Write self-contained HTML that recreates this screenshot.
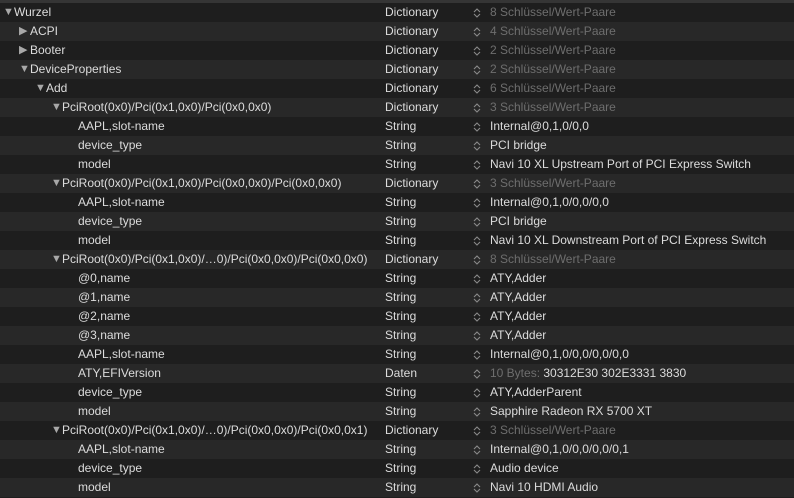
<!DOCTYPE html><html><head><style>
body{margin:0;background:#1e1e1e;width:794px;height:498px;overflow:hidden;font-family:"Liberation Sans",sans-serif;font-size:12px;color:#dcdcdc}
.top{height:3px;background:#353535}
.r{height:19px;position:relative;line-height:19px;white-space:nowrap}
.r:nth-child(even){background:#282828}
.k{position:absolute}
.t{position:absolute;left:385px}
.s{position:absolute;left:473px;top:5px;width:8px;height:10px}
.v{position:absolute;left:490px}
.g{color:#6e6e6e}
.tri{position:absolute;font-size:11px;color:#a8a8a8}
</style></head><body><div class="top"></div><div id="l"></div>
<script>
const rows=[
[0,'d','Wurzel','Dictionary','8 Schlüssel/Wert-Paare',1],
[1,'r','ACPI','Dictionary','4 Schlüssel/Wert-Paare',1],
[1,'r','Booter','Dictionary','2 Schlüssel/Wert-Paare',1],
[1,'d','DeviceProperties','Dictionary','2 Schlüssel/Wert-Paare',1],
[2,'d','Add','Dictionary','6 Schlüssel/Wert-Paare',1],
[3,'d','PciRoot(0x0)/Pci(0x1,0x0)/Pci(0x0,0x0)','Dictionary','3 Schlüssel/Wert-Paare',1],
[4,'','AAPL,slot-name','String','Internal@0,1,0/0,0'],
[4,'','device_type','String','PCI bridge'],
[4,'','model','String','Navi 10 XL Upstream Port of PCI Express Switch'],
[3,'d','PciRoot(0x0)/Pci(0x1,0x0)/Pci(0x0,0x0)/Pci(0x0,0x0)','Dictionary','3 Schlüssel/Wert-Paare',1],
[4,'','AAPL,slot-name','String','Internal@0,1,0/0,0/0,0'],
[4,'','device_type','String','PCI bridge'],
[4,'','model','String','Navi 10 XL Downstream Port of PCI Express Switch'],
[3,'d','PciRoot(0x0)/Pci(0x1,0x0)/…0)/Pci(0x0,0x0)/Pci(0x0,0x0)','Dictionary','8 Schlüssel/Wert-Paare',1],
[4,'','@0,name','String','ATY,Adder'],
[4,'','@1,name','String','ATY,Adder'],
[4,'','@2,name','String','ATY,Adder'],
[4,'','@3,name','String','ATY,Adder'],
[4,'','AAPL,slot-name','String','Internal@0,1,0/0,0/0,0/0,0'],
[4,'','ATY,EFIVersion','Daten','<span class=g>10 Bytes:</span> 30312E30 302E3331 3830'],
[4,'','device_type','String','ATY,AdderParent'],
[4,'','model','String','Sapphire Radeon RX 5700 XT'],
[3,'d','PciRoot(0x0)/Pci(0x1,0x0)/…0)/Pci(0x0,0x0)/Pci(0x0,0x1)','Dictionary','3 Schlüssel/Wert-Paare',1],
[4,'','AAPL,slot-name','String','Internal@0,1,0/0,0/0,0/0,1'],
[4,'','device_type','String','Audio device'],
[4,'','model','String','Navi 10 HDMI Audio']];
const st='<svg class="s" viewBox="0 0 8 10"><path d="M1 4L4 1L7 4M1 6L4 9L7 6" fill="none" stroke="#8a8a8a" stroke-width="1.1"/></svg>';
let h='';rows.forEach(r=>{const x=[14,30,46,62,78][r[0]];let tri='';
if(r[1])tri=`<span class="tri" style="left:${x-11}px">${r[1]=='d'?'▼':'▶'}</span>`;
h+=`<div class="r">${tri}<span class="k" style="left:${x}px">${r[2]}</span><span class="t">${r[3]}</span>${st}<span class="v${r[5]?' g':''}">${r[4]}</span></div>`});
document.getElementById('l').innerHTML=h;
</script></body></html>
